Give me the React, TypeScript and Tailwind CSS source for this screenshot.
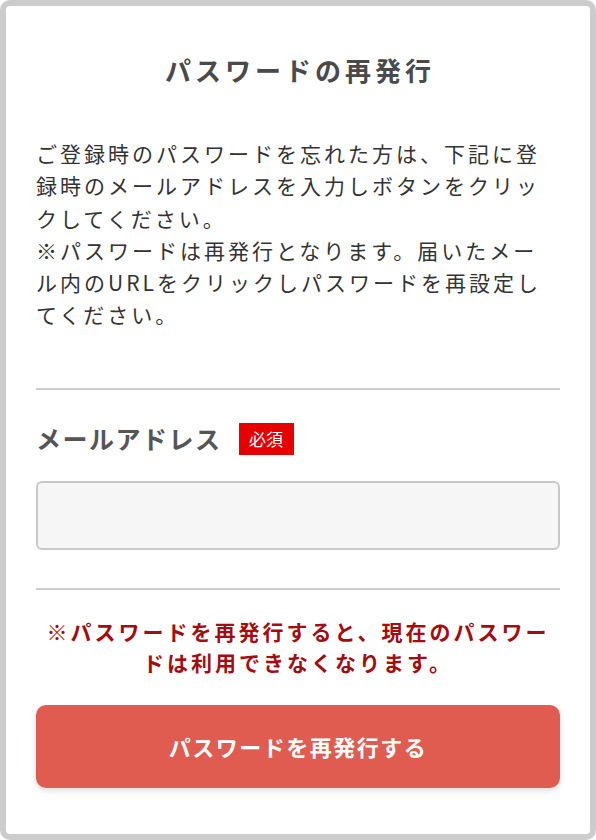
import React from "react";

const font = { fontFamily: '"Noto Sans CJK JP", "Noto Sans", sans-serif' };

export default function App() {
  return (
    <div className="w-[596px] h-[840px] bg-white" style={font}>
      <div className="w-full h-full border-[6px] border-[#cccccc] rounded-[10px] bg-white flex flex-col px-[30px] pt-[46px]">
        <h1 className="text-[26px] leading-[36px] font-bold text-[#4a4a4a] text-center tracking-[4px] pl-[4px]">
          パスワードの再発行
        </h1>
        <p className="mt-[49px] text-[21px] leading-[32.3px] tracking-[3px] text-[#333333]">
          ご登録時のパスワードを忘れた方は、下記に登録時のメールアドレスを入力しボタンをクリックしてください。
          <br />
          ※パスワードは再発行となります。届いたメール内のURLをクリックしパスワードを再設定してください。
        </p>
        <div className="mt-[57px] h-[2px] bg-[#cccccc]" />
        <div className="mt-[33px] flex items-center h-[32px]">
          <span className="text-[25px] font-bold text-[#555555] tracking-[1.5px]">メールアドレス</span>
          <span className="ml-[17px] w-[55px] h-[32px] bg-[#e60000] text-white text-[17px] flex items-center justify-center">
            必須
          </span>
        </div>
        <input
          type="text"
          className="mt-[26px] h-[69px] w-full bg-[#f6f6f6] border-2 border-[#c8c8c8] rounded-[6px] outline-none px-3 text-[20px]"
        />
        <div className="mt-[38px] h-[2px] bg-[#cccccc]" />
        <p className="mt-[26px] text-[21px] leading-[31px] font-bold text-[#a30d12] text-center tracking-[3px]">
          ※パスワードを再発行すると、現在のパスワードは利用できなくなります。
        </p>
        <button className="mt-[27px] h-[83px] w-full rounded-[10px] bg-[#e05b50] text-white text-[22px] font-bold tracking-[1.5px] shadow-[0_3px_6px_rgba(0,0,0,0.12)]">
          パスワードを再発行する
        </button>
      </div>
    </div>
  );
}
